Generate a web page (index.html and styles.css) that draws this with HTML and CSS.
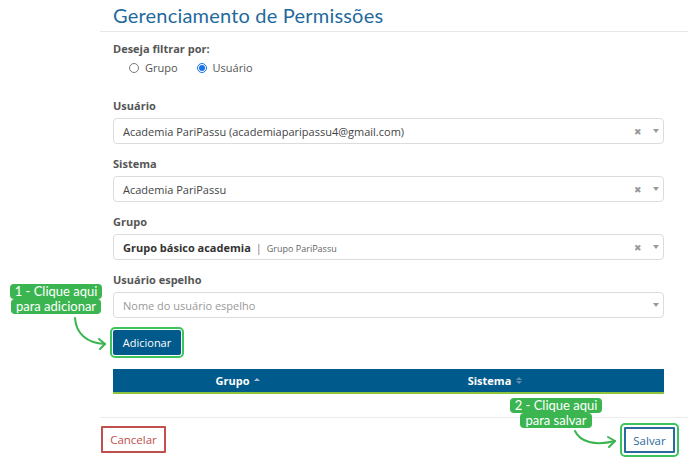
FILE: index.html
```html
<!DOCTYPE html>
<html lang="pt-BR">
<head>
<meta charset="utf-8">
<title>Gerenciamento de Permissões</title>
<link rel="stylesheet" href="styles.css">
</head>
<body>
<div class="page">
  <div class="title-wrap">
    <h1 class="title">Gerenciamento de Permissões</h1>
  </div>
  <div class="form">
    <div class="filter-label">Deseja filtrar por:</div>
    <div class="radios">
      <span class="radio"><span class="dot"></span>Grupo</span>
      <span class="radio"><span class="dot checked"></span>Usuário</span>
    </div>

    <div class="field">
      <div class="label">Usuário</div>
      <div class="select">
        <span class="value">Academia PariPassu (academiaparipassu4@gmail.com)</span>
        <span class="clear">✖</span><span class="caret"></span>
      </div>
    </div>
    <div class="field">
      <div class="label">Sistema</div>
      <div class="select">
        <span class="value">Academia PariPassu</span>
        <span class="clear">✖</span><span class="caret"></span>
      </div>
    </div>
    <div class="field">
      <div class="label">Grupo</div>
      <div class="select">
        <span class="value"><b class="strong">Grupo básico academia</b><span class="sep">|</span><span class="small">Grupo PariPassu</span></span>
        <span class="clear">✖</span><span class="caret"></span>
      </div>
    </div>
    <div class="field">
      <div class="label">Usuário espelho</div>
      <div class="select">
        <span class="value placeholder">Nome do usuário espelho</span>
        <span class="caret"></span>
      </div>
    </div>

    <div class="add-row"><button class="btn-add">Adicionar</button></div>

    <div class="table-head">
      <div class="th">Grupo <span class="sort-up"></span></div>
      <div class="th">Sistema <span class="sort-both"><i class="tri-up"></i><i class="tri-down"></i></span></div>
      <div class="th"></div>
    </div>
  </div>
  <div class="footer">
    <button class="btn-cancel">Cancelar</button>
    <button class="btn-save">Salvar</button>
  </div>
</div>

<div class="note note1"><span>1 - Clique aqui</span><span>para adicionar</span></div>
<div class="note note2"><span>2 - Clique aqui</span><span>para salvar</span></div>

<svg class="arrows" width="688" height="465" viewBox="0 0 688 465">
  <g fill="none" stroke="#3bb54f" stroke-width="2" stroke-linecap="round" stroke-linejoin="round">
    <path d="M75 318 C 76 333, 86 343, 105 344"/>
    <path d="M99 339 L105 344 L100 349"/>
    <path d="M575 431 C 580 442, 595 446, 615 441"/>
    <path d="M608 437 L615 441 L609 447"/>
  </g>
</svg>
</body>
</html>
```

FILE: styles.css
```css
html, body {
  margin: 0;
  padding: 0;
}
body {
  width: 688px;
  height: 465px;
  overflow: hidden;
  position: relative;
  background: #fff;
  font-family: "Open Sans", "Liberation Sans", sans-serif;
  font-size: 11px;
  color: #555;
}
.page {
  margin-left: 100px;
}
.title-wrap {
  height: 32px;
  padding: 3px 13px 0;
  box-sizing: border-box;
  border-bottom: 1px solid #e8e8e8;
}
.title {
  margin: 0;
  font-family: "Lato", "Open Sans", sans-serif;
  font-weight: 400;
  font-size: 20px;
  line-height: 24px;
  color: #1f6a9c;
  letter-spacing: 0.2px;
}
.form {
  padding: 0 24px 0 13px;
}
.filter-label {
  margin-top: 9px;
  font-weight: 700;
  line-height: 16px;
  color: #555;
}
.radios {
  display: flex;
  gap: 19px;
  margin-top: 3px;
  padding-left: 16px;
  line-height: 16px;
  color: #555;
}
.radio {
  display: flex;
  align-items: center;
  gap: 6px;
}
.dot {
  width: 8px;
  height: 8px;
  border-radius: 50%;
  border: 1px solid #7a7a7a;
  box-sizing: content-box;
  position: relative;
}
.dot.checked {
  border-color: #1a73e8;
  background: #fff;
}
.dot.checked::after {
  content: "";
  position: absolute;
  left: 1px;
  top: 1px;
  width: 6px;
  height: 6px;
  border-radius: 50%;
  background: #1a73e8;
}
.field {
  margin-bottom: 12px;
}
.radios + .field {
  margin-top: 22px;
}
.label {
  font-weight: 700;
  line-height: 16px;
  margin-bottom: 4px;
  color: #555;
}
.select {
  height: 26px;
  box-sizing: border-box;
  border: 1px solid #dcdcdc;
  border-radius: 4px;
  display: flex;
  align-items: center;
  padding: 0 4px 0 9px;
  color: #444;
  font-size: 11px;
}
.value {
  flex: 1;
  white-space: nowrap;
}
.strong {
  font-weight: 700;
  color: #333;
}
.sep {
  color: #777;
  margin: 0 5px;
}
.small {
  font-size: 9px;
  color: #666;
}
.placeholder {
  color: #999;
}
.clear {
  font-size: 9px;
  color: #999;
  margin-right: 11px;
}
.caret {
  width: 0;
  height: 0;
  border-left: 3px solid transparent;
  border-right: 3px solid transparent;
  border-top: 4px solid #999;
}
.add-row {
  display: flex;
}
.btn-add {
  font-family: "Open Sans", sans-serif;
  font-size: 11px;
  color: #fff;
  background: #005a8b;
  border: 0;
  border-radius: 2px;
  height: 25px;
  width: 68px;
  padding: 0;
  outline: 2px solid #3cc55c;
  outline-offset: 1px;
}
.table-head {
  margin-top: 14px;
  margin-bottom: 23px;
  display: grid;
  grid-template-columns: 250px 264px 1fr;
  background: #005b8c;
  border-bottom: 2px solid #8cc43e;
  height: 25px;
  box-sizing: border-box;
}
.th {
  color: #fff;
  font-weight: 700;
  display: flex;
  align-items: center;
  justify-content: center;
  gap: 5px;
}
.sort-up {
  width: 0;
  height: 0;
  border-left: 3px solid transparent;
  border-right: 3px solid transparent;
  border-bottom: 3px solid #a9c2d3;
  margin-bottom: 2px;
}
.sort-both {
  display: flex;
  flex-direction: column;
  gap: 1px;
}
.tri-up, .tri-down {
  display: block;
  width: 0;
  height: 0;
  border-left: 3px solid transparent;
  border-right: 3px solid transparent;
}
.tri-up {
  border-bottom: 3px solid #5f8fb0;
}
.tri-down {
  border-top: 3px solid #5f8fb0;
}
.footer {
  border-top: 1px solid #ececec;
  padding: 8px 13px 0 1px;
  display: flex;
  justify-content: space-between;
  align-items: flex-start;
}
.btn-cancel {
  font-family: "Open Sans", sans-serif;
  font-size: 11.5px;
  color: #c0504d;
  background: #fff;
  border: 2px solid #c0504d;
  border-radius: 1px;
  width: 65px;
  height: 27px;
  padding: 0;
}
.btn-save {
  font-family: "Open Sans", sans-serif;
  font-size: 11.5px;
  color: #2a6b9c;
  background: #fff;
  border: 2px solid #2a6b9c;
  border-radius: 1px;
  width: 51px;
  height: 26px;
  padding: 0;
  margin-top: 1px;
  outline: 2px solid #3cc55c;
  outline-offset: 2px;
}
.note {
  position: absolute;
  display: flex;
  flex-direction: column;
  align-items: center;
  font-family: "Lato", "Open Sans", sans-serif;
  font-size: 13px;
  color: #fff;
  line-height: 15px;
}
.note span {
  background: #3bb54f;
  border-radius: 4px;
  padding: 0 5px;
  height: 15px;
  overflow: hidden;
}
.note1 {
  left: 6px;
  top: 284px;
  width: 100px;
}
.note2 {
  left: 506px;
  top: 398px;
  width: 100px;
}
.arrows {
  position: absolute;
  left: 0;
  top: 0;
  pointer-events: none;
}
```
